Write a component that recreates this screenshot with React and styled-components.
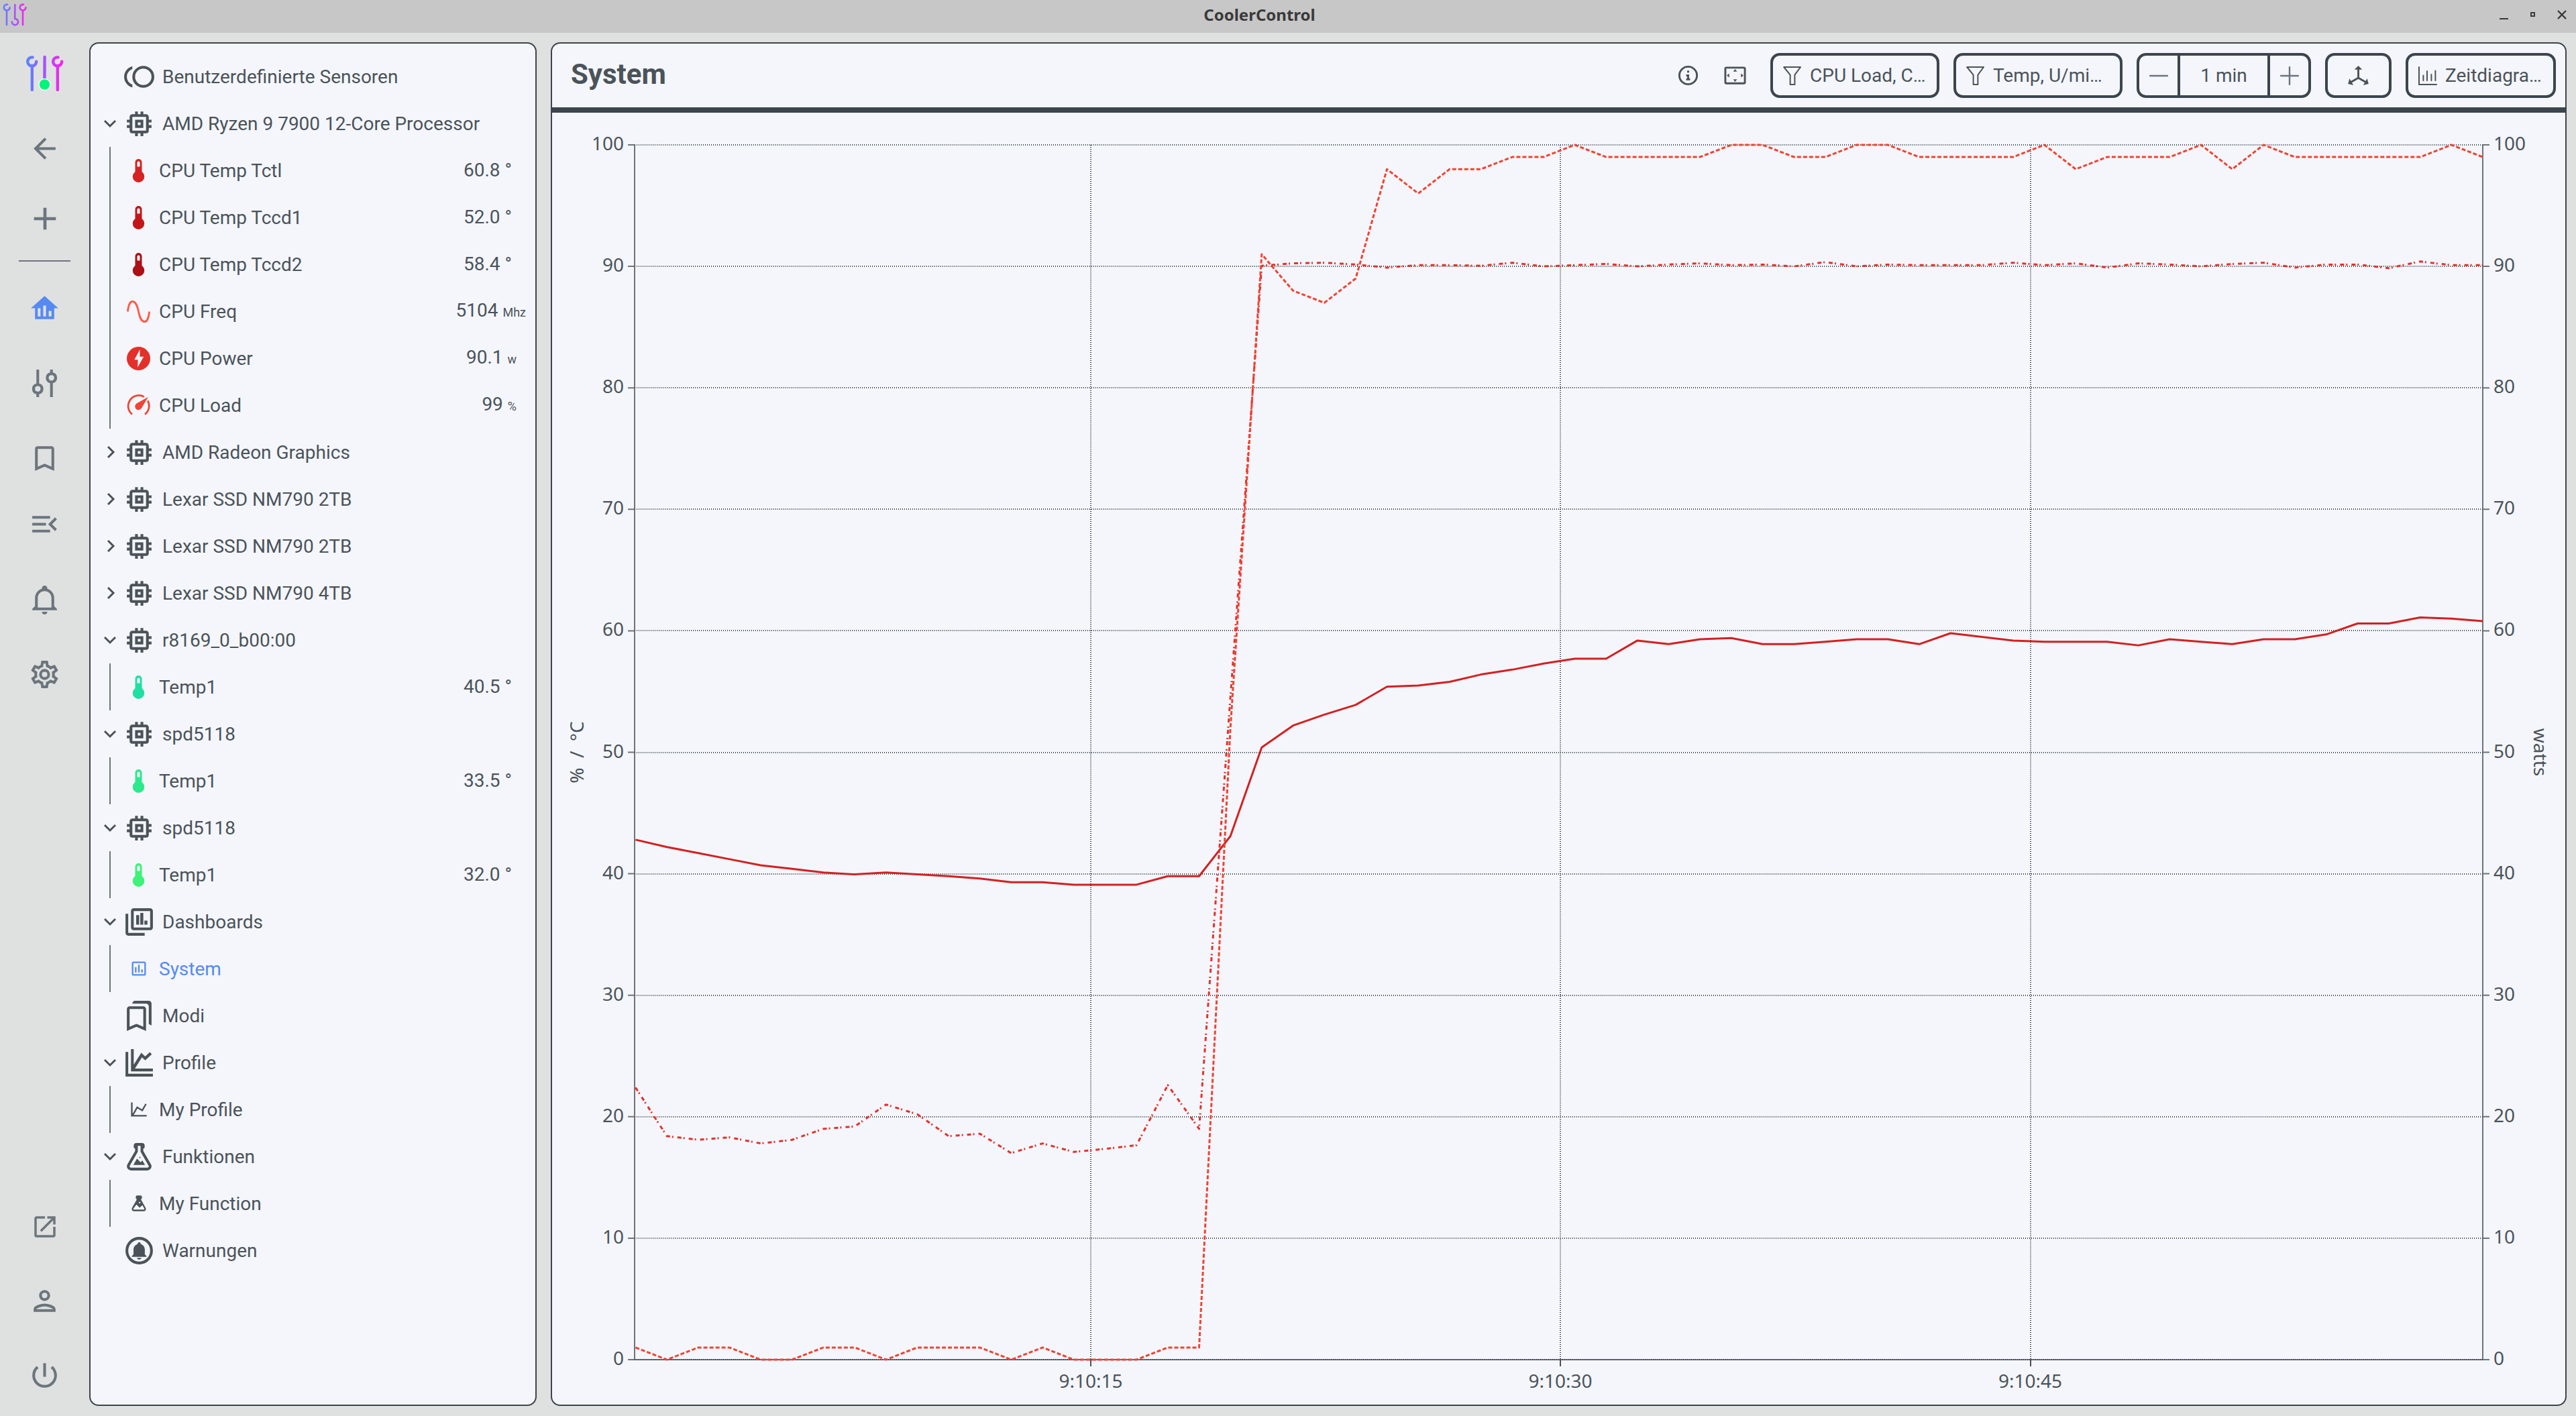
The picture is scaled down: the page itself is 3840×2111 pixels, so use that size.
import React, { useLayoutEffect, useRef, useState } from "react";
import styled, { createGlobalStyle, css } from "styled-components";

const c = {
  titlebar: "#c7c7c7",
  body: "#dfe1e0",
  panel: "#f4f6fb",
  border: "#3c454e",
  text: "#4b5359",
  muted: "#6c757d",
  accent: "#568af2",
};

const GlobalStyle = createGlobalStyle`
  *, *::before, *::after { box-sizing: border-box; }
  body {
    margin: 0;
    background: ${c.body};
    color: ${c.text};
    font-family: Roboto, "Liberation Sans", sans-serif;
    font-size: 28px;
    line-height: 36px;
  }
  button, input, select { font: inherit; color: inherit; margin: 0; }
  button { background: none; border: 0; padding: 0; cursor: pointer; }
  svg { display: block; flex: none; }
`;

/* ---------- icons ---------- */

const paths = {
  sensors:
    "M15,4A8,8 0 0,1 23,12A8,8 0 0,1 15,20A8,8 0 0,1 7,12A8,8 0 0,1 15,4M15,18A6,6 0 0,0 21,12A6,6 0 0,0 15,6A6,6 0 0,0 9,12A6,6 0 0,0 15,18M3,12C3,14.61 4.67,16.83 7,17.65V19.74C3.55,18.85 1,15.73 1,12C1,8.27 3.55,5.15 7,4.26V6.35C4.67,7.17 3,9.39 3,12Z",
  chip:
    "M17,17H7V7H17M21,11V9H19V7C19,5.89 18.1,5 17,5H15V3H13V5H11V3H9V5H7C5.89,5 5,5.89 5,7V9H3V11H5V13H3V15H5V17A2,2 0 0,0 7,19H9V21H11V19H13V21H15V19H17A2,2 0 0,0 19,17V15H21V13H19V11M13,13H11V11H13M15,9H9V15H15V9Z",
  dashboards:
    "M20 2H8C6.9 2 6 2.9 6 4V16C6 17.1 6.9 18 8 18H20C21.1 18 22 17.1 22 16V4C22 2.9 21.1 2 20 2M20 16H8V4H20V16M4 6H2V20C2 21.1 2.9 22 4 22H16V20H4V6M12 14H9.8V7H12V14M15 14H12.8V5.4H15V14M18 14H15.8V11H18V14Z",
  dashboard:
    "M9 17H7V10H9V17M13 17H11V7H13V17M17 17H15V13H17V17M19 19H5V5H19V19M19 3H5C3.9 3 3 3.9 3 5V19C3 20.1 3.9 21 5 21H19C20.1 21 21 20.1 21 19V5C21 3.9 20.1 3 19 3Z",
  modes:
    "M15 7v12.97l-4.21-1.81-.79-.34-.79.34L5 19.97V7h10m4-6H8.99C7.89 1 7 1.9 7 3h10c1.1 0 2 .9 2 2v13l2 1V3c0-1.1-.9-2-2-2zm-4 4H5c-1.1 0-2 .9-2 2v16l7-3 7 3V7c0-1.1-.9-2-2-2z",
  profiles:
    "M2 4H4V20H22V22H2ZM6 2H8V13.4L13.5 4.7L16.4 7.3L19.8 4.2L21.2 5.7L16.4 10.2L14 8L8.9 16.2H22V18.2H6Z",
  profile:
    "M16,11.78L20.24,4.45L21.97,5.45L16.74,14.5L10.23,10.75L5.46,19H22V21H2V3H4V17.54L9.5,8L16,11.78Z",
  functions:
    "M5,19A1,1 0 0,0 6,20H18A1,1 0 0,0 19,19C19,18.79 18.93,18.59 18.82,18.43L13,8.35V4H11V8.35L5.18,18.43C5.07,18.59 5,18.79 5,19M6,22A3,3 0 0,1 3,19C3,18.4 3.18,17.84 3.5,17.37L9,7.81V6A1,1 0 0,1 8,5V4A2,2 0 0,1 10,2H14A2,2 0 0,1 16,4V5A1,1 0 0,1 15,6V7.81L20.5,17.37C20.82,17.84 21,18.4 21,19A3,3 0 0,1 18,22H6M13,16L14.34,14.66L16.27,18H7.73L10.39,13.39L13,16M12.5,12A0.5,0.5 0 0,1 13,12.5A0.5,0.5 0 0,1 12.5,13A0.5,0.5 0 0,1 12,12.5A0.5,0.5 0 0,1 12.5,12Z",
  fn:
    "M6,22A3,3 0 0,1 3,19C3,18.4 3.18,17.84 3.5,17.37L9,7.81V6A1,1 0 0,1 8,5V4A2,2 0 0,1 10,2H14A2,2 0 0,1 16,4V5A1,1 0 0,1 15,6V7.81L20.5,17.37C20.82,17.84 21,18.4 21,19A3,3 0 0,1 18,22H6M5,19A1,1 0 0,0 6,20H18A1,1 0 0,0 19,19C19,18.79 18.93,18.59 18.82,18.43L16.5,14.4L13,17.5L8.9,13.6L5.18,18.43C5.07,18.59 5,18.79 5,19M13,10A1,1 0 0,0 12,11A1,1 0 0,0 13,12A1,1 0 0,0 14,11A1,1 0 0,0 13,10Z",
  back: "M20 11H7.83l5.59-5.59L12 4l-8 8 8 8 1.41-1.41L7.83 13H20v-2z",
  add: "M19 13h-6v6h-2v-6H5v-2h6V5h2v6h6v2z",
  home: "M12,3L2,12H5V20H19V12H22L12,3M9,18H7V12H9V18M13,18H11V10H13V18M17,18H15V14H17V18Z",
  controls:
    "M6 2H8V12.1A4 4 0 0 1 8 19.9V22H6V19.9A4 4 0 0 1 6 12.1ZM7 14A2 2 0 1 0 7 18A2 2 0 1 0 7 14ZM16 2H18V4.1A4 4 0 0 1 18 11.9V22H16V11.9A4 4 0 0 1 16 4.1ZM17 6A2 2 0 1 0 17 10A2 2 0 1 0 17 6Z",
  bookmark:
    "M17,18L12,15.82L7,18V5H17M17,3H7A2,2 0 0,0 5,5V21L12,18L19,21V5C19,3.89 18.1,3 17,3Z",
  collapse:
    "M3 18h13v-2H3v2zm0-5h10v-2H3v2zm0-7v2h13V6H3zm18 9.59L17.42 12 21 8.41 19.59 7l-5 5 5 5L21 15.59z",
  bell:
    "M10 21H14C14 22.1 13.1 23 12 23S10 22.1 10 21M21 19V20H3V19L5 17V11C5 7.9 7 5.2 10 4.3V4C10 2.9 10.9 2 12 2S14 2.9 14 4V4.3C17 5.2 19 7.9 19 11V17L21 19M17 11C17 8.2 14.8 6 12 6S7 8.2 7 11V18H17V11Z",
  settings:
    "M12,8A4,4 0 0,1 16,12A4,4 0 0,1 12,16A4,4 0 0,1 8,12A4,4 0 0,1 12,8M12,10A2,2 0 0,0 10,12A2,2 0 0,0 12,14A2,2 0 0,0 14,12A2,2 0 0,0 12,10M10,22C9.75,22 9.54,21.82 9.5,21.58L9.13,18.93C8.5,18.68 7.96,18.34 7.44,17.94L4.95,18.95C4.73,19.03 4.46,18.95 4.34,18.73L2.34,15.27C2.21,15.05 2.27,14.78 2.46,14.63L4.57,12.97L4.5,12L4.57,11L2.46,9.37C2.27,9.22 2.21,8.95 2.34,8.73L4.34,5.27C4.46,5.05 4.73,4.96 4.95,5.05L7.44,6.05C7.96,5.66 8.5,5.32 9.13,5.07L9.5,2.42C9.54,2.18 9.75,2 10,2H14C14.25,2 14.46,2.18 14.5,2.42L14.87,5.07C15.5,5.32 16.04,5.66 16.56,6.05L19.05,5.05C19.27,4.96 19.54,5.05 19.66,5.27L21.66,8.73C21.79,8.95 21.73,9.22 21.54,9.37L19.43,11L19.5,12L19.43,13L21.54,14.63C21.73,14.78 21.79,15.05 21.66,15.27L19.66,18.73C19.54,18.95 19.27,19.04 19.05,18.95L16.56,17.95C16.04,18.34 15.5,18.68 14.87,18.93L14.5,21.58C14.46,21.82 14.25,22 14,22H10M11.25,4L10.88,6.61C9.68,6.86 8.62,7.5 7.85,8.39L5.44,7.35L4.69,8.65L6.8,10.2C6.4,11.37 6.4,12.64 6.8,13.8L4.68,15.36L5.43,16.66L7.86,15.62C8.63,16.5 9.68,17.14 10.87,17.38L11.24,20H12.76L13.13,17.39C14.32,17.14 15.37,16.5 16.14,15.62L18.57,16.66L19.32,15.36L17.2,13.81C17.6,12.64 17.6,11.37 17.2,10.2L19.31,8.65L18.56,7.35L16.15,8.39C15.38,7.5 14.32,6.86 13.12,6.62L12.75,4H11.25Z",
  open:
    "M14,3V5H17.59L7.76,14.83L9.17,16.24L19,6.41V10H21V3M19,19H5V5H12V3H5C3.89,3 3,3.9 3,5V19A2,2 0 0,0 5,21H19A2,2 0 0,0 21,19V12H19V19Z",
  person:
    "M12 6a2 2 0 1 1 0 4 2 2 0 0 1 0-4m0 10c2.7 0 5.8 1.29 6 2H6c.23-.72 3.31-2 6-2m0-12C9.79 4 8 5.79 8 8s1.79 4 4 4 4-1.79 4-4-1.79-4-4-4zm0 10c-2.67 0-8 1.34-8 4v2h16v-2c0-2.66-5.33-4-8-4z",
  power:
    "M13 3h-2v10h2V3zm4.83 2.17l-1.42 1.42A6.92 6.92 0 0 1 19 12c0 3.87-3.13 7-7 7A6.995 6.995 0 0 1 7.58 6.58L6.17 5.17A8.932 8.932 0 0 0 3 12a9 9 0 0 0 18 0c0-2.74-1.23-5.18-3.17-6.83z",
  info:
    "M12 2A10 10 0 1 0 12 22A10 10 0 1 0 12 2M12 20A8 8 0 1 1 12 4A8 8 0 1 1 12 20M11 7H13V9H11V7M14 17V15H13V11H10V13H11V15H10V17H14Z",
  overscan:
    "M12,5.5L10,8H14L12,5.5M18,10V14L20.5,12L18,10M6,10L3.5,12L6,14V10M14,16H10L12,18.5L14,16M21,3H3A2,2 0 0,0 1,5V19A2,2 0 0,0 3,21H21A2,2 0 0,0 23,19V5A2,2 0 0,0 21,3M21,19H3V5H21V19Z",
  axes:
    "M12,2L16,6H13V13.85L19.53,17.61L21,15.03L22.5,20.5L17,21.96L18.53,19.35L12,15.58L5.47,19.35L7,21.96L1.5,20.5L3,15.03L4.47,17.61L11,13.85V6H8L12,2Z",
};

function Icon({ name, size = 49, color = "currentColor" }) {
  return (
    <svg width={size} height={size} viewBox="0 0 24 24" fill={color} fillRule="evenodd" aria-hidden="true">
      <path d={paths[name]} />
    </svg>
  );
}

function AlertsIcon() {
  return (
    <svg width="49" height="49" viewBox="0 0 24 24" fill="currentColor" aria-hidden="true">
      <circle cx="12" cy="12" r="9" fill="none" stroke="currentColor" strokeWidth="2" />
      <path
        transform="translate(4.9 4.7) scale(0.59)"
        d="M21,19V20H3V19L5,17V11C5,7.9 7.03,5.17 10,4.29C10,4.19 10,4.1 10,4A2,2 0 0,1 12,2A2,2 0 0,1 14,4C14,4.1 14,4.19 14,4.29C16.97,5.17 19,7.9 19,11V17L21,19M14.6,21.4A2.6,2 0 0,1 12,23.4A2.6,2 0 0,1 9.4,21.4"
      />
    </svg>
  );
}

function SensorIcon({ kind, color }) {
  return (
    <svg width="35" height="35" viewBox="0 0 35 35" fill={color} aria-hidden="true">
      {kind === "temp" && (
        <>
          <rect x="12.5" y="0" width="10" height="26" rx="5" />
          <circle cx="17.5" cy="26.2" r="8.7" />
          <path d="M15.5 11.5V5.5a2 2 0 0 1 4 0v6z" fill={c.panel} />
        </>
      )}
      {kind === "freq" && (
        <path
          d="M1.4 17.5C3.5 -4 14 -1.5 17.5 17.5S31.5 39 33.6 17.5"
          fill="none"
          stroke={color}
          strokeWidth="2.8"
        />
      )}
      {kind === "power" && (
        <>
          <circle cx="17.5" cy="17.5" r="17.5" />
          <path d="M19.6 4L11.3 19.2H16.5L16.2 30.4L25.2 14.7H19.4Z" fill={c.panel} />
        </>
      )}
      {kind === "load" && (
        <>
          <g fill="none" stroke={color} strokeWidth="2.8">
            <path d="M8 30.6A15.8 15.8 0 0 1 25.8 4.6" />
            <path d="M31.2 10.3A15.8 15.8 0 0 1 27 30.6" />
          </g>
          <path d="M32 4.8L21.8 21.8A5.2 5.2 0 1 1 14.6 14.6Z" />
        </>
      )}
    </svg>
  );
}

function Chevron({ open }) {
  return (
    <svg width="30" height="30" viewBox="0 0 30 30" fill="none" stroke="currentColor" strokeWidth="3" aria-hidden="true">
      <path d={open ? "M7 11L15 19L23 11" : "M12 7L20 15L12 23"} />
    </svg>
  );
}

function Logo() {
  return (
    <svg width="56" height="54" viewBox="0 0 56 54" aria-hidden="true">
      <defs>
        <linearGradient id="logo" gradientUnits="userSpaceOnUse" x1="0" y1="0" x2="56" y2="0">
          <stop offset="0" stopColor="#5588ff" />
          <stop offset="0.5" stopColor="#a653fa" />
          <stop offset="1" stopColor="#ff1eea" />
        </linearGradient>
      </defs>
      <g fill="none" stroke="url(#logo)" strokeWidth="4.4" strokeLinecap="round">
        <path d="M9.6 3.4A6.5 6.5 0 1 0 15.2 9.6M8.8 16V52" />
        <path d="M47.6 3.4A6.5 6.5 0 1 0 53.2 9.6M46.8 16V52" />
        <path d="M27.6 3L27.4 36" />
      </g>
      <circle cx="27.5" cy="44" r="8.5" fill="#00f57a" stroke={c.panel} strokeWidth="1.6" />
    </svg>
  );
}

function WindowLogo() {
  return (
    <svg width="36" height="34" viewBox="0 0 36 34" fill="none" stroke="url(#logoSmall)" strokeWidth="2.6" strokeLinecap="round" aria-hidden="true">
      <defs>
        <linearGradient id="logoSmall" gradientUnits="userSpaceOnUse" x1="0" y1="0" x2="36" y2="0">
          <stop offset="0" stopColor="#5588ff" />
          <stop offset="0.5" stopColor="#a653fa" />
          <stop offset="1" stopColor="#ff1eea" />
        </linearGradient>
      </defs>
      <path d="M7 1.8A4.4 4.4 0 1 0 10.6 6.4M6 11V32" />
      <path d="M31 1.8A4.4 4.4 0 1 0 34.4 6.4M30 11V32" />
      <path d="M18.3 2L18.2 23A4.6 4.6 0 1 1 13.8 27.6" />
    </svg>
  );
}

function FilterIcon() {
  return (
    <svg width="28" height="28" viewBox="0 0 28 28" fill="none" stroke="currentColor" strokeWidth="2" strokeLinejoin="round" aria-hidden="true">
      <path d="M1.2 1H26L17.4 12.6V27H10.6V12.6Z" />
    </svg>
  );
}

function BarsIcon() {
  return (
    <svg width="28" height="28" viewBox="0 0 28 28" fill="none" stroke="currentColor" strokeWidth="2" strokeLinecap="round" aria-hidden="true">
      <path d="M1 1V27H27M7.4 13.5V21M13 7V21M19.4 12V21M25.4 6.5V21" />
    </svg>
  );
}

/* ---------- window frame ---------- */

const Window = styled.div`
  display: flex;
  flex-direction: column;
  min-height: 100vh;
`;

const TitleBar = styled.header`
  display: flex;
  align-items: center;
  height: 49px;
  padding: 0 0 6px 4px;
  background: ${c.titlebar};
`;

const WindowTitle = styled.div`
  flex: 1;
  padding-left: 4px;
  text-align: center;
  font: 700 24px/36px "Noto Sans", "Open Sans", sans-serif;
  color: #3a3a3a;
`;

const WindowButton = styled.button`
  display: grid;
  place-items: center;
  width: 43px;
  height: 43px;
  color: #3a3a3a;
`;

const Body = styled.div`
  flex: 1;
  display: flex;
  padding: 14px 14px 15px 0;
`;

/* ---------- icon rail ---------- */

const Rail = styled.nav`
  display: flex;
  flex-direction: column;
  flex: none;
  width: 133px;
  margin: -14px 0 -15px;
  padding-bottom: 5px;
  color: ${c.muted};
`;

const RailLogo = styled.div`
  display: grid;
  place-items: center;
  height: 120px;
`;

const RailButton = styled.button`
  display: grid;
  place-items: center;
  height: ${(p) => p.$height || 112}px;
  color: ${(p) => (p.$active ? c.accent : "inherit")};
`;

const RailDivider = styled.hr`
  width: 77px;
  height: 2px;
  margin: 10px auto 13px;
  border: 0;
  background: ${c.muted};
`;

const RailSpacer = styled.div`
  flex: ${(p) => (p.$fill ? 1 : "none")};
  height: 14px;
`;

/* ---------- sensor tree ---------- */

const panel = css`
  background: ${c.panel};
  border: 2px solid ${c.border};
  border-radius: 14px;
`;

const TreePanel = styled.aside`
  ${panel}
  flex: none;
  width: 667px;
  padding: 14px 14px 0;
`;

const List = styled.ul`
  list-style: none;
  margin: 0;
  padding: 0;
`;

const GroupRow = styled.button`
  display: flex;
  align-items: center;
  width: 100%;
  height: 70px;
  text-align: left;
`;

const ChevronSlot = styled.span`
  flex: none;
  width: 30px;
  margin-right: 4px;
`;

const GroupLabel = styled.span`
  margin-left: 10px;
  padding-top: 2px;
`;

const Children = styled(List)`
  margin-left: 14px;
  border-left: 2px solid ${c.muted};
`;

const Leaf = styled.a`
  display: flex;
  align-items: center;
  height: 70px;
  padding-left: 24px;
  color: ${(p) => (p.$active ? c.accent : "inherit")};
  text-decoration: none;
`;

const LeafIcon = styled.span`
  display: grid;
  place-items: center;
  width: 35px;
  margin-right: 13px;
`;

const LeafLabel = styled.span`
  flex: 1;
  padding-top: 2px;
`;

const unitInset = { temp: 21, freq: 0, power: 14, load: 14 };

const Reading = styled.span`
  padding-right: ${(p) => unitInset[p.$kind]}px;
`;

const Unit = styled.span`
  font-size: 18px;
`;

/* ---------- main view ---------- */

const View = styled.main`
  ${panel}
  display: flex;
  flex-direction: column;
  flex: 1;
  min-width: 0;
  margin-left: 21px;
`;

const ViewHeader = styled.div`
  display: flex;
  align-items: center;
  gap: 21px;
  height: 103px;
  padding: 0 14px 0 28px;
  border-bottom: 8px solid ${c.border};
`;

const Heading = styled.h1`
  flex: 1;
  margin: 0;
  padding-bottom: 4px;
  font-size: 42px;
  line-height: 48px;
  font-weight: 700;
`;

const IconPair = styled.div`
  display: flex;
  margin-right: -3px;
`;

const IconButton = styled.button`
  display: grid;
  place-items: center;
  width: 70px;
  height: 67px;
`;

const box = css`
  height: 67px;
  border: 4px solid ${c.border};
  border-radius: 14px;
`;

const SelectBox = styled.label`
  ${box}
  display: flex;
  align-items: center;
  gap: 12px;
  width: ${(p) => p.$width}px;
  padding-left: 15px;
`;

const Select = styled.select`
  flex: 1;
  min-width: 0;
  height: 100%;
  padding: 0;
  border: 0;
  outline: 0;
  background: none;
  appearance: none;
`;

const Stepper = styled.div`
  ${box}
  display: flex;
  width: 260px;
`;

const StepButton = styled.button`
  display: grid;
  place-items: center;
  width: 57px;
  color: ${c.muted};
`;

const StepValue = styled.input`
  flex: 1;
  min-width: 0;
  padding: 0;
  border: solid ${c.border};
  border-width: 0 4px;
  outline: 0;
  background: none;
  text-align: center;
`;

const AxisButton = styled.button`
  ${box}
  display: grid;
  place-items: center;
  width: 99px;
`;

const ChartArea = styled.div`
  flex: 1;
  min-height: 0;
  position: relative;
`;

const ChartSvg = styled.svg`
  position: absolute;
  inset: 0;
  width: 100%;
  height: 100%;
  font: 28px "Noto Sans", "Open Sans", sans-serif;
  fill: ${c.text};
`;

/* ---------- data ---------- */

const tempSeries = [
  42.8, 42.2, 41.7, 41.2, 40.7, 40.4, 40.1, 39.95, 40.1, 39.95, 39.8, 39.6, 39.3, 39.3, 39.1, 39.1, 39.1, 39.8, 39.8,
  43.1, 50.4, 52.2, 53.1, 53.9, 55.4, 55.5, 55.8, 56.4, 56.8, 57.3, 57.7, 57.7, 59.2, 58.9, 59.3, 59.4, 58.9, 58.9,
  59.1, 59.3, 59.3, 58.9, 59.8, 59.5, 59.2, 59.1, 59.1, 59.1, 58.8, 59.3, 59.1, 58.9, 59.3, 59.3, 59.7, 60.6, 60.6,
  61.1, 61, 60.8,
];
const loadSeries = [
  1, 0, 1, 1, 0, 0, 1, 1, 0, 1, 1, 1, 0, 1, 0, 0, 0, 1, 1, 52, 91, 88, 87, 89, 98, 96, 98, 98, 99, 99, 100, 99, 99,
  99, 99, 100, 100, 99, 99, 100, 100, 99, 99, 99, 99, 100, 98, 99, 99, 99, 100, 98, 100, 99, 99, 99, 99, 99, 100, 99,
];
const powerSeries = [
  22.4, 18.4, 18.1, 18.3, 17.8, 18.1, 19, 19.2, 21, 20.2, 18.4, 18.6, 17, 17.8, 17.1, 17.35, 17.65, 22.6, 19, 54.5,
  90.05, 90.25, 90.3, 90.15, 89.9, 90.1, 90.1, 90.05, 90.3, 90, 90.1, 90.2, 90, 90.15, 90.25, 90.1, 90.15, 90, 90.35,
  90, 90.15, 90.1, 90.1, 90.1, 90.3, 90.1, 90.25, 89.9, 90.25, 90.15, 90, 90.2, 90.3, 89.9, 90.15, 90.15, 89.85,
  90.4, 90.1, 90.1,
];

const tree = [
  { icon: "sensors", label: "Benutzerdefinierte Sensoren" },
  {
    icon: "chip",
    label: "AMD Ryzen 9 7900 12-Core Processor",
    open: true,
    sensors: [
      { kind: "temp", color: "#d62222", label: "CPU Temp Tctl", value: "60.8", unit: "°" },
      { kind: "temp", color: "#c4161a", label: "CPU Temp Tccd1", value: "52.0", unit: "°" },
      { kind: "temp", color: "#ac0f16", label: "CPU Temp Tccd2", value: "58.4", unit: "°" },
      { kind: "freq", color: "#ff5a45", label: "CPU Freq", value: "5104", unit: "Mhz" },
      { kind: "power", color: "#e4302a", label: "CPU Power", value: "90.1", unit: "w" },
      { kind: "load", color: "#f04535", label: "CPU Load", value: "99", unit: "%" },
    ],
  },
  { icon: "chip", label: "AMD Radeon Graphics", open: false },
  { icon: "chip", label: "Lexar SSD NM790 2TB", open: false },
  { icon: "chip", label: "Lexar SSD NM790 2TB", open: false },
  { icon: "chip", label: "Lexar SSD NM790 4TB", open: false },
  {
    icon: "chip",
    label: "r8169_0_b00:00",
    open: true,
    sensors: [{ kind: "temp", color: "#1fe0a2", label: "Temp1", value: "40.5", unit: "°" }],
  },
  {
    icon: "chip",
    label: "spd5118",
    open: true,
    sensors: [{ kind: "temp", color: "#2aea8c", label: "Temp1", value: "33.5", unit: "°" }],
  },
  {
    icon: "chip",
    label: "spd5118",
    open: true,
    sensors: [{ kind: "temp", color: "#3cf278", label: "Temp1", value: "32.0", unit: "°" }],
  },
  { icon: "dashboards", label: "Dashboards", open: true, items: [{ icon: "dashboard", label: "System", active: true }] },
  { icon: "modes", label: "Modi" },
  { icon: "profiles", label: "Profile", open: true, items: [{ icon: "profile", label: "My Profile" }] },
  { icon: "functions", label: "Funktionen", open: true, items: [{ icon: "fn", label: "My Function" }] },
  { icon: "alerts", label: "Warnungen" },
];

/* ---------- chart ---------- */

const inset = { left: 123, right: 123, top: 48, bottom: 67 };
const lastIndex = 59;
const leadIn = 0.03;
const timeTicks = [
  { at: 14.54, label: "9:10:15" },
  { at: 29.54, label: "9:10:30" },
  { at: 44.55, label: "9:10:45" },
];
const levels = [0, 10, 20, 30, 40, 50, 60, 70, 80, 90, 100];

function TimeChart() {
  const ref = useRef(null);
  const [size, setSize] = useState({ w: 0, h: 0 });

  useLayoutEffect(() => {
    const measure = () => setSize({ w: ref.current.clientWidth, h: ref.current.clientHeight });
    measure();
    const observer = new ResizeObserver(measure);
    observer.observe(ref.current);
    return () => observer.disconnect();
  }, []);

  const left = inset.left;
  const right = size.w - inset.right;
  const top = inset.top;
  const bottom = size.h - inset.bottom;
  const middle = (top + bottom) / 2;
  const x = (i) => left + ((i + leadIn) / (lastIndex + leadIn)) * (right - left);
  const y = (v) => bottom - (v / 100) * (bottom - top);
  const line = (data) => data.map((v, i) => `${x(i)},${y(v)}`).join(" ");

  return (
    <ChartArea ref={ref}>
      {size.w > 0 && (
        <ChartSvg role="img" aria-label="System">
          <g stroke={c.muted} strokeWidth="2">
            <path d={`M${left} ${top}V${bottom}H${right}V${top}`} fill="none" />
            {levels.map((v) => (
              <path key={v} d={`M${left - 10} ${y(v)}H${left}M${right} ${y(v)}H${right + 10}`} />
            ))}
          </g>
          <g stroke={c.border} strokeWidth="2" strokeDasharray="1 2" shapeRendering="crispEdges">
            {levels.map((v) => (
              <line key={v} x1={left} x2={right} y1={y(v)} y2={y(v)} />
            ))}
            {timeTicks.map((t) => (
              <line key={t.label} x1={Math.round(x(t.at))} x2={Math.round(x(t.at))} y1={top} y2={bottom} />
            ))}
          </g>
          {timeTicks.map((t) => (
            <g key={t.label}>
              <line x1={Math.round(x(t.at))} x2={Math.round(x(t.at))} y1={bottom} y2={bottom + 10} stroke={c.text} strokeWidth="2" />
              <text x={x(t.at)} y={bottom + 42} textAnchor="middle">
                {t.label}
              </text>
            </g>
          ))}
          {levels.map((v) => (
            <g key={v}>
              <text x={left - 16} y={y(v) + 8} textAnchor="end">
                {v}
              </text>
              <text x={right + 16} y={y(v) + 8}>
                {v}
              </text>
            </g>
          ))}
          <text transform={`translate(47 ${middle}) rotate(-90)`} textAnchor="middle" xmlSpace="preserve">
            {"%\u00a0 /\u00a0 °C"}
          </text>
          <text transform={`translate(${size.w - 47} ${middle}) rotate(90)`} textAnchor="middle">
            watts
          </text>
          <g fill="none" strokeWidth="3" strokeLinejoin="round">
            <polyline points={line(tempSeries)} stroke="#d42022" />
            <polyline points={line(powerSeries)} stroke="#e4302b" strokeDasharray="6 3 2 6" />
            <polyline points={line(loadSeries)} stroke="#f04333" strokeDasharray="6 3" />
          </g>
        </ChartSvg>
      )}
    </ChartArea>
  );
}

/* ---------- assembly ---------- */

function TreeGroup({ group }) {
  const collapsible = group.open !== undefined;
  return (
    <li>
      <GroupRow type="button" aria-expanded={collapsible ? group.open : undefined}>
        <ChevronSlot>{collapsible && <Chevron open={group.open} />}</ChevronSlot>
        {group.icon === "alerts" ? <AlertsIcon /> : <Icon name={group.icon} />}
        <GroupLabel>{group.label}</GroupLabel>
      </GroupRow>
      {(group.sensors || group.items) && (
        <Children>
          {(group.sensors || []).map((s) => (
            <li key={s.label}>
              <Leaf href="#">
                <LeafIcon>
                  <SensorIcon kind={s.kind} color={s.color} />
                </LeafIcon>
                <LeafLabel>{s.label}</LeafLabel>
                <Reading $kind={s.kind}>
                  {s.value} {s.kind === "temp" ? s.unit : <Unit>{s.unit}</Unit>}
                </Reading>
              </Leaf>
            </li>
          ))}
          {(group.items || []).map((s) => (
            <li key={s.label}>
              <Leaf href="#" $active={s.active}>
                <LeafIcon>
                  <Icon name={s.icon} size={28} />
                </LeafIcon>
                <LeafLabel>{s.label}</LeafLabel>
              </Leaf>
            </li>
          ))}
        </Children>
      )}
    </li>
  );
}

export default function App() {
  return (
    <Window>
      <GlobalStyle />
      <TitleBar>
        <WindowLogo />
        <WindowTitle>CoolerControl</WindowTitle>
        <WindowButton aria-label="Minimieren">
          <svg width="14" height="14" viewBox="0 0 14 14">
            <path d="M0 13H13" stroke="currentColor" strokeWidth="2" />
          </svg>
        </WindowButton>
        <WindowButton aria-label="Maximieren">
          <svg width="8" height="8" viewBox="0 0 8 8">
            <rect x="1" y="1" width="5" height="5" fill="none" stroke="currentColor" strokeWidth="2" />
          </svg>
        </WindowButton>
        <WindowButton aria-label="Schließen">
          <svg width="14" height="14" viewBox="0 0 14 14">
            <path d="M1 1L13 13M13 1L1 13" stroke="currentColor" strokeWidth="2.4" />
          </svg>
        </WindowButton>
      </TitleBar>
      <Body>
        <Rail>
          <RailLogo>
            <Logo />
          </RailLogo>
          <RailButton $height={104} aria-label="Zurück">
            <Icon name="back" />
          </RailButton>
          <RailButton $height={105} aria-label="Hinzufügen">
            <Icon name="add" size={56} />
          </RailButton>
          <RailDivider />
          <RailButton $active aria-label="Startseite">
            <Icon name="home" />
          </RailButton>
          <RailButton aria-label="Steuerung">
            <Icon name="controls" />
          </RailButton>
          <RailButton aria-label="Modi">
            <Icon name="bookmark" />
          </RailButton>
          <RailButton $height={84} aria-label="Menü einklappen">
            <Icon name="collapse" />
          </RailButton>
          <RailSpacer />
          <RailButton aria-label="Warnungen">
            <Icon name="bell" />
          </RailButton>
          <RailButton aria-label="Einstellungen">
            <Icon name="settings" />
          </RailButton>
          <RailSpacer $fill />
          <RailButton $height={111} aria-label="Im Browser öffnen">
            <Icon name="open" size={42} />
          </RailButton>
          <RailButton $height={111} aria-label="Konto">
            <Icon name="person" />
          </RailButton>
          <RailButton $height={111} aria-label="Beenden">
            <Icon name="power" />
          </RailButton>
        </Rail>
        <TreePanel>
          <List>
            {tree.map((group, i) => (
              <TreeGroup key={i} group={group} />
            ))}
          </List>
        </TreePanel>
        <View>
          <ViewHeader>
            <Heading>System</Heading>
            <IconPair>
              <IconButton aria-label="Info">
                <Icon name="info" size={35} />
              </IconButton>
              <IconButton aria-label="Vollbild">
                <Icon name="overscan" size={35} />
              </IconButton>
            </IconPair>
            <SelectBox $width={252}>
              <FilterIcon />
              <Select aria-label="Sensoren">
                <option>CPU Load, C…</option>
              </Select>
            </SelectBox>
            <SelectBox $width={252}>
              <FilterIcon />
              <Select aria-label="Typen">
                <option>Temp, U/mi…</option>
              </Select>
            </SelectBox>
            <Stepper>
              <StepButton aria-label="Weniger">
                <svg width="28" height="28" viewBox="0 0 28 28">
                  <path d="M1 14H27" stroke="currentColor" strokeWidth="2.4" strokeLinecap="round" />
                </svg>
              </StepButton>
              <StepValue aria-label="Zeitraum" defaultValue="1 min" />
              <StepButton aria-label="Mehr">
                <svg width="28" height="28" viewBox="0 0 28 28">
                  <path d="M1 14H27M14 1V27" stroke="currentColor" strokeWidth="2.4" strokeLinecap="round" />
                </svg>
              </StepButton>
            </Stepper>
            <AxisButton aria-label="Achsen">
              <Icon name="axes" size={35} />
            </AxisButton>
            <SelectBox $width={224}>
              <BarsIcon />
              <Select aria-label="Diagrammtyp">
                <option>Zeitdiagra…</option>
              </Select>
            </SelectBox>
          </ViewHeader>
          <TimeChart />
        </View>
      </Body>
    </Window>
  );
}
